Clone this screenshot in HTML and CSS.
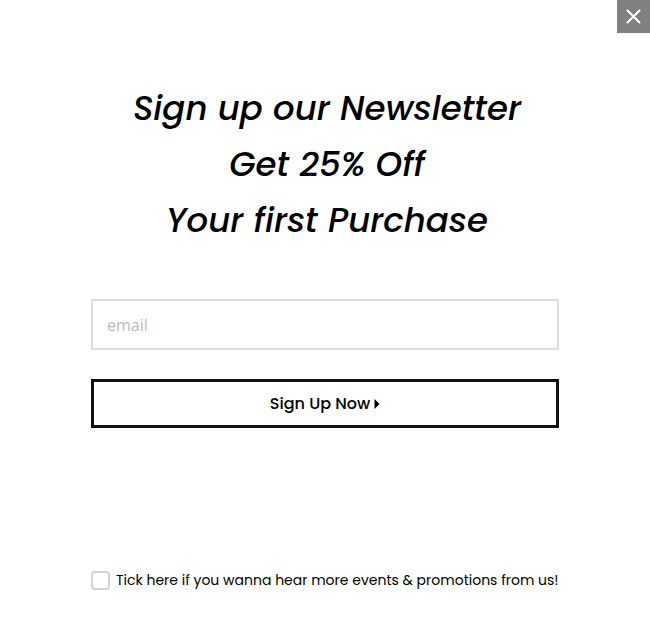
FILE: index.html
```html
<!DOCTYPE html>
<html lang="en">
<head>
<meta charset="utf-8">
<meta name="viewport" content="width=device-width, initial-scale=1">
<title>Newsletter</title>
<link rel="stylesheet" href="styles.css">
</head>
<body>
<main class="popup">
  <button class="close" type="button" aria-label="Close">
    <svg viewBox="0 0 33 33" aria-hidden="true"><path d="M10.500 10.500 22.500 22.500M22.500 10.500 10.500 22.500"/></svg>
  </button>
  <h1 class="title">Sign up our Newsletter<br>Get 25% Off<br>Your first Purchase</h1>
  <form class="form">
    <input class="email" type="email" placeholder="email" aria-label="email">
    <button class="submit" type="button">Sign Up Now<svg class="caret" viewBox="0 0 6 12" aria-hidden="true"><path d="M0.500 1 5.500 6 0.500 11Z"/></svg></button>
    <label class="consent"><input class="tick" type="checkbox"><span>Tick here if you wanna hear more events &amp; promotions from us!</span></label>
  </form>
</main>
</body>
</html>
```

FILE: styles.css
```css
* { box-sizing: border-box; }
body {
  margin: 0;
  background: #fff;
  color: #000;
  font-family: Poppins, Inter, sans-serif;
}
.popup {
  position: relative;
  padding: 80px 14% 40px;
}
.close {
  position: absolute;
  top: 0;
  right: 0;
  width: 33px;
  height: 33px;
  padding: 0;
  border: 0;
  background: #808080;
}
.close svg { display: block; stroke: #fff; stroke-width: 2; stroke-linecap: round; }
.title {
  margin: 0 0 51px;
  padding-left: 4px;
  font-size: 34px;
  font-style: italic;
  font-weight: 500;
  line-height: 56px;
  text-align: center;
}
.form { display: flex; flex-direction: column; }
.email {
  width: 100%;
  height: 51px;
  padding: 0 14px;
  border: 2px solid #ddd;
  border-radius: 0;
  font: 16px "Open Sans", sans-serif;
}
.email::placeholder { color: #bbb; opacity: 1; }
.submit {
  display: flex;
  align-items: center;
  justify-content: center;
  gap: 4px;
  height: 49px;
  margin-top: 29px;
  border: 3px solid #111;
  background: #fff;
  color: #000;
  font: 500 16px Poppins, Inter, sans-serif;
}
.caret { width: 6px; height: 12px; }
.consent {
  display: flex;
  align-items: center;
  gap: 6px;
  margin-top: 142px;
  font-size: 14px;
  line-height: 20px;
}
.tick {
  flex: none;
  appearance: none;
  width: 19px;
  height: 19px;
  margin: 0;
  border: 2px solid #d4d4d4;
  border-radius: 4px;
  background: #fff;
}
```
